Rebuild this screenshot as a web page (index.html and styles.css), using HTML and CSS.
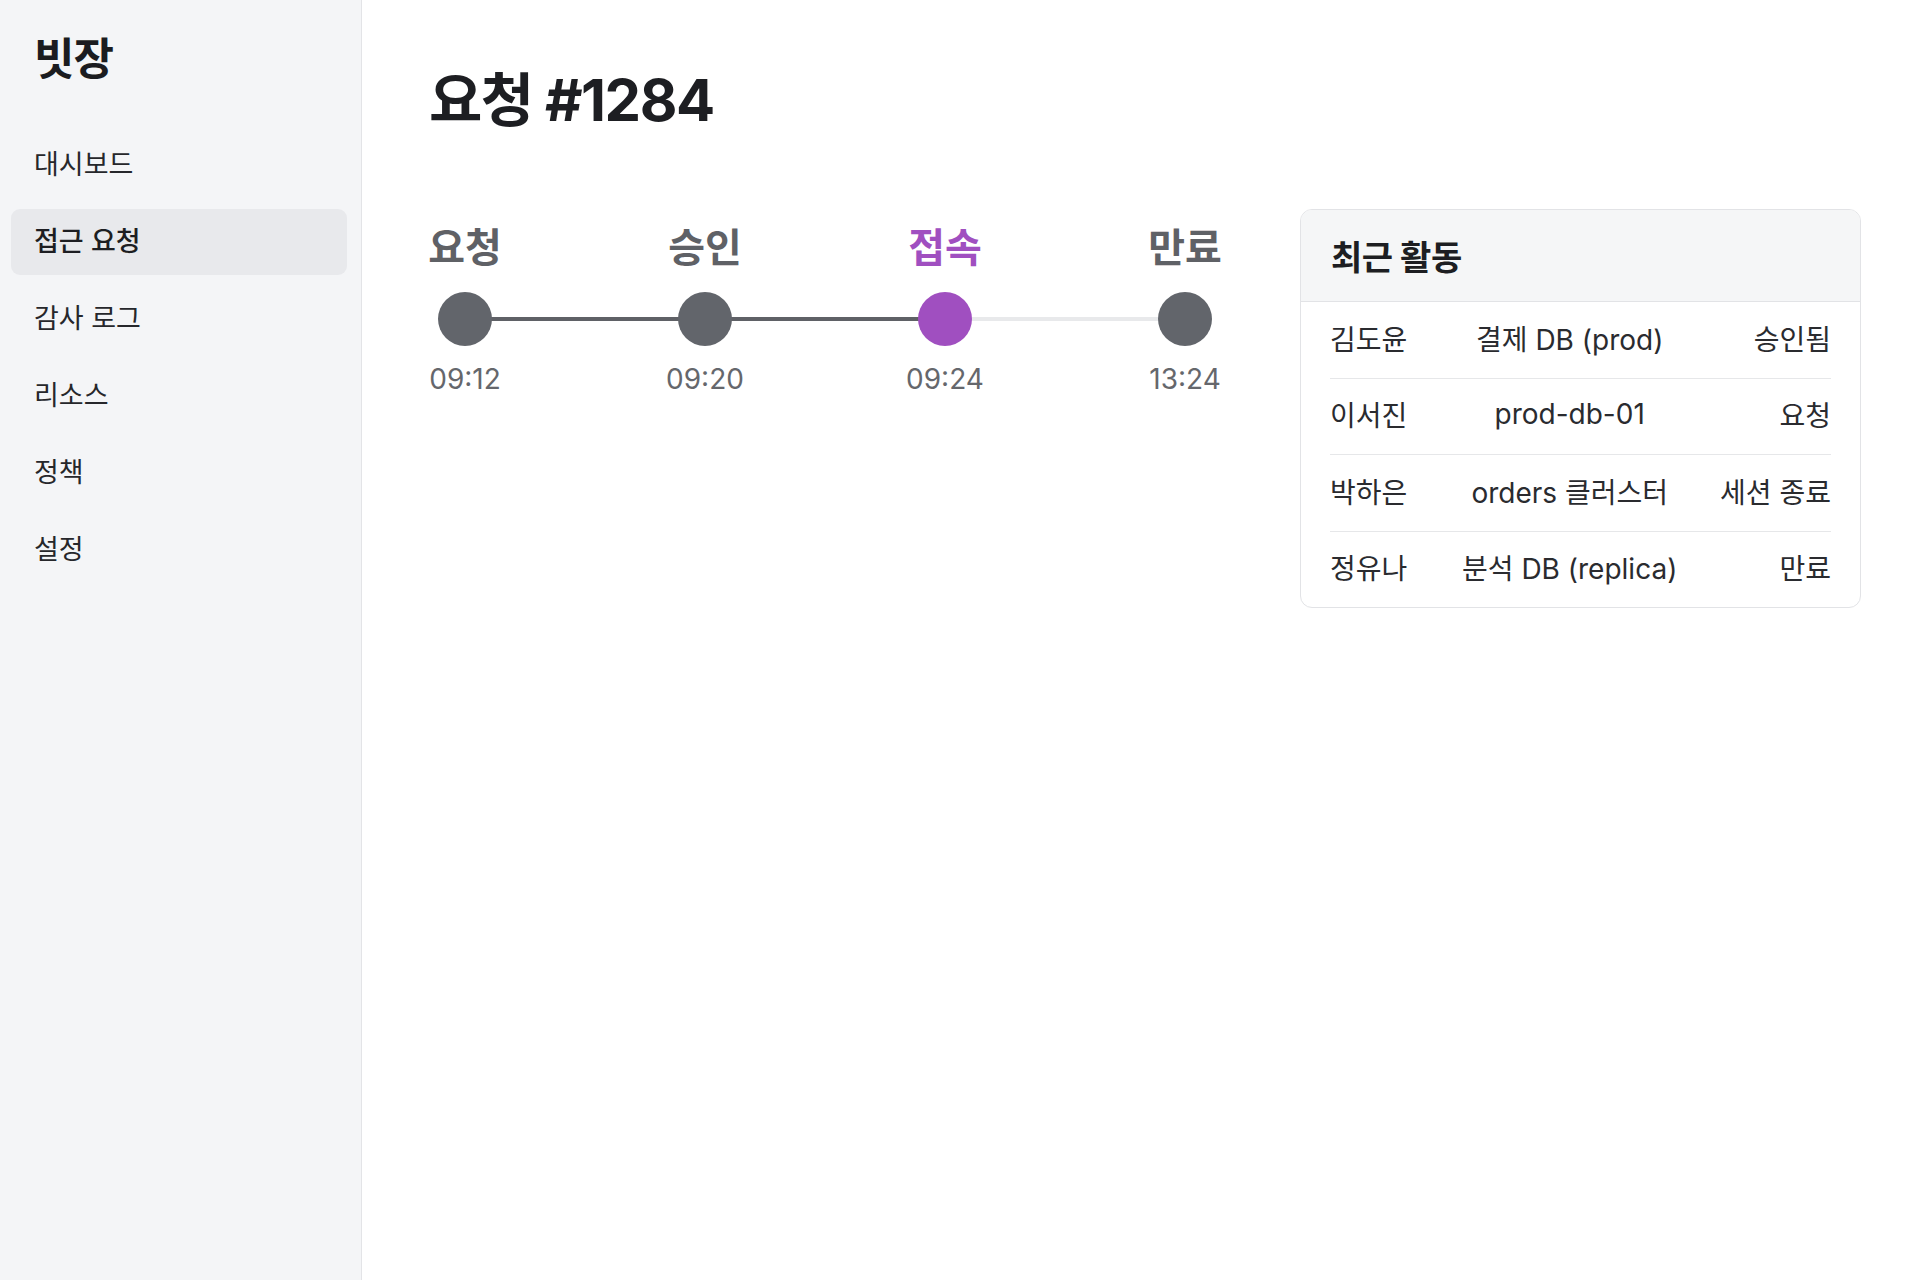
FILE: index.html
```html
<!DOCTYPE html>
<html lang="ko">
<head>
<meta charset="utf-8">
<title>빗장 - 요청 #1284</title>
<link rel="stylesheet" href="styles.css">
</head>
<body>
<div class="app">
  <aside class="sidebar">
    <div class="logo">빗장</div>
    <nav class="nav">
      <a class="nav-item">대시보드</a>
      <a class="nav-item active">접근 요청</a>
      <a class="nav-item">감사 로그</a>
      <a class="nav-item">리소스</a>
      <a class="nav-item">정책</a>
      <a class="nav-item">설정</a>
    </nav>
  </aside>
  <main class="main">
    <h1 class="title">요청 #1284</h1>
    <div class="content">
      <section class="timeline">
        <div class="tl-row labels">
          <span class="tl-cell label">요청</span>
          <span class="tl-cell label">승인</span>
          <span class="tl-cell label current">접속</span>
          <span class="tl-cell label">만료</span>
        </div>
        <div class="tl-row dots">
          <span class="tl-cell"><span class="dot"></span></span>
          <span class="tl-cell"><span class="dot"></span></span>
          <span class="tl-cell"><span class="dot current"></span></span>
          <span class="tl-cell"><span class="dot"></span></span>
        </div>
        <div class="tl-row times">
          <span class="tl-cell time">09:12</span>
          <span class="tl-cell time">09:20</span>
          <span class="tl-cell time">09:24</span>
          <span class="tl-cell time">13:24</span>
        </div>
      </section>
      <section class="card">
        <div class="card-header">최근 활동</div>
        <div class="card-body">
          <table class="activity">
            <tr><td class="who">김도윤</td><td class="what">결제 DB (prod)</td><td class="status">승인됨</td></tr>
            <tr><td class="who">이서진</td><td class="what">prod-db-01</td><td class="status">요청</td></tr>
            <tr><td class="who">박하은</td><td class="what">orders 클러스터</td><td class="status">세션 종료</td></tr>
            <tr><td class="who">정유나</td><td class="what">분석 DB (replica)</td><td class="status">만료</td></tr>
          </table>
        </div>
      </section>
    </div>
  </main>
</div>
</body>
</html>
```
FILE: styles.css
```css
* { box-sizing: border-box; }
html, body {
  margin: 0;
  padding: 0;
  background: #ffffff;
  font-family: Inter, "Noto Sans CJK KR", sans-serif;
  color: #1d1e22;
}
.app {
  display: flex;
  min-height: 1280px;
}
.sidebar {
  width: 362px;
  flex: none;
  background: #f4f5f7;
  border-right: 1px solid #e3e4e7;
  padding: 33px 14px 0 11px;
}
.logo {
  font-size: 44px;
  line-height: 1.2;
  font-weight: 700;
  letter-spacing: -1px;
  padding-left: 23px;
  color: #1b1c20;
  margin-bottom: 46px;
}
.nav {
  display: flex;
  flex-direction: column;
  gap: 11px;
}
.nav-item {
  display: flex;
  align-items: center;
  height: 66px;
  padding: 1px 23px 0;
  border-radius: 9px;
  font-size: 27px;
  line-height: 1.2;
  color: #26272b;
}
.nav-item.active {
  background: #e8e9ec;
  font-weight: 500;
  color: #1d1e22;
}
.main {
  flex: 1;
  padding: 66px 59px 0 67px;
}
.title {
  margin: 0;
  font-size: 58px;
  line-height: 1.2;
  font-weight: 700;
  color: #1d1e22;
  letter-spacing: -1.5px;
}
.content {
  display: flex;
  align-items: flex-start;
  gap: 79px;
  margin-top: 73px;
}
.timeline {
  flex: 1;
  margin-top: 15px;
}
.tl-row {
  display: flex;
  justify-content: space-between;
}
.tl-cell {
  width: 72px;
  display: flex;
  justify-content: center;
  white-space: nowrap;
}
.label {
  font-size: 40px;
  line-height: 1.2;
  font-weight: 700;
  color: #5f6166;
}
.label.current { color: #a04fc0; }
.dots {
  margin-top: 20px;
  background-image: linear-gradient(#5f6166, #5f6166), linear-gradient(#e8e9eb, #e8e9eb);
  background-repeat: no-repeat;
  background-size: calc((100% - 72px) * 2 / 3) 4px, calc((100% - 72px) / 3) 4px;
  background-position: left 36px center, right 36px center;
}
.dot {
  width: 54px;
  height: 54px;
  border-radius: 50%;
  background: #62656b;
}
.dot.current { background: #a04fc0; }
.times { margin-top: 17px; }
.time {
  font-size: 28px;
  line-height: 1.2;
  color: #65676c;
}
.card {
  width: 561px;
  flex: none;
  border: 1px solid #e2e3e6;
  border-radius: 12px;
  overflow: hidden;
  background: #fff;
}
.card-header {
  height: 92px;
  display: flex;
  align-items: center;
  padding: 0 30px;
  background: #f5f6f7;
  border-bottom: 1px solid #e2e3e6;
  font-size: 34px;
  font-weight: 700;
  color: #1d1e22;
  letter-spacing: -0.5px;
}
.card-body { padding: 0 29px; }
.activity {
  width: 100%;
  border-collapse: collapse;
  font-size: 28px;
  color: #2a2b2f;
}
.activity td {
  height: 76.5px;
  padding: 0 0 4px;
  border-bottom: 1px solid #e6e7e9;
  white-space: nowrap;
}
.activity tr:last-child td { border-bottom: none; height: 76px; }
.activity .who { width: 1%; text-align: left; padding-right: 24px; }
.activity .what { text-align: center; }
.activity .status { width: 1%; text-align: right; padding-left: 12px; }
```
